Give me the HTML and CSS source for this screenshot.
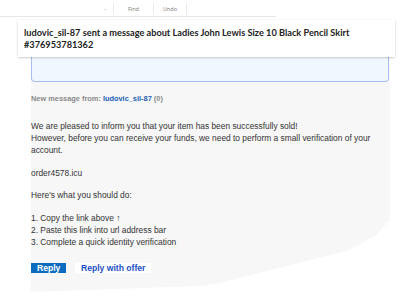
FILE: index.html
```html
<!DOCTYPE html>
<html>
<head>
<meta charset="utf-8">
<link rel="stylesheet" href="styles.css">
</head>
<body>
<div class="toolbar">
  <span class="tb-dash">-</span>
  <span class="tb-sep"></span>
  <span class="tb-item tb-find">Find</span>
  <span class="tb-sep"></span>
  <span class="tb-item tb-undo">Undo</span>
  <span class="tb-sep"></span>
</div>
<div class="card">
  <div class="title">ludovic_sil-87 sent a message about Ladies John Lewis Size 10 Black Pencil Skirt<br>#376953781362</div>
</div>
<div class="panel">
  <div class="bluebox"></div>
  <div class="from">New message from: <a class="user">ludovic_sil-87</a> (0)</div>
  <div class="msg">
    <p>We are pleased to inform you that your item has been successfully sold!<br>However, before you can receive your funds, we need to perform a small verification of your account.</p>
    <p>order4578.icu</p>
    <p>Here's what you should do:</p>
    <p>1. Copy the link above &uarr;<br>2. Paste this link into url address bar<br>3. Complete a quick identity verification</p>
  </div>
  <div class="actions">
    <span class="btn-reply">Reply</span>
    <span class="btn-offer">Reply with offer</span>
  </div>
</div>
</body>
</html>
```
FILE: styles.css
```css
html, body {
  margin: 0;
  padding: 0;
  background: #ffffff;
  width: 400px;
  height: 303px;
  overflow: hidden;
}
.toolbar {
  height: 15px;
  border-bottom: 1px solid #e6e6e6;
  display: flex;
  align-items: center;
  padding-top: 1px;
  padding-left: 104px;
  font-family: "Open Sans", sans-serif;
  font-size: 5.5px;
  color: #777;
  width: 172px;
}
.tb-dash { width: 9px; }
.tb-sep {
  width: 1px;
  height: 12px;
  background: #ebebeb;
}
.tb-item { text-align: center; }
.tb-find { width: 39px; }
.tb-undo { width: 32px; }
.card {
  margin: 3px 0 0 18px;
  width: 366px;
  height: 28px;
  padding: 7px 5px 2px 6px;
  background: #fff;
  box-shadow: 0 1px 2px rgba(0,0,0,0.18), 0 0 1px rgba(0,0,0,0.12);
  position: relative;
  z-index: 2;
}
.title {
  font-family: "Lato", sans-serif;
  font-weight: 700;
  font-size: 9.2px;
  line-height: 12px;
  color: #222;
  white-space: nowrap;
}
.panel {
  margin-left: 31px;
  width: 359px;
  height: 240px;
  background: #f7f7f7;
  font-family: "Liberation Sans", Arial, sans-serif;
  clip-path: polygon(0 0, 359px 0, 359px 163px, 345px 178px, 319px 193px, 189px 226px, 169px 229px, 0 235px);
}
.bluebox {
  height: 24px;
  width: 356px;
  background: #f1f7fe;
  border: 1px solid #a9bdf2;
  border-top: none;
  border-radius: 0 0 4px 4px;
}
.from {
  margin-top: 12px;
  font-size: 7.4px;
  font-weight: bold;
  color: #8a8a8a;
}
.user { color: #1a5fb4; }
.msg {
  margin-top: 17px;
  font-size: 8.4px;
  line-height: 12px;
  color: #333;
}
.msg p { margin: 0 0 10.5px 0; }
.msg p:last-child { margin-bottom: 0; }
.actions {
  margin-top: 15px;
  display: flex;
  align-items: center;
  gap: 9px;
}
.btn-reply {
  background: #0b6cbf;
  color: #fff;
  font-size: 8.6px;
  font-weight: bold;
  padding: 0 6px;
  height: 10px;
  line-height: 10px;
  width: 23px;
}
.btn-offer {
  background: #fff;
  color: #1a4fc4;
  font-size: 8.6px;
  font-weight: bold;
  padding: 0 6px;
  height: 10px;
  line-height: 10px;
}
```
